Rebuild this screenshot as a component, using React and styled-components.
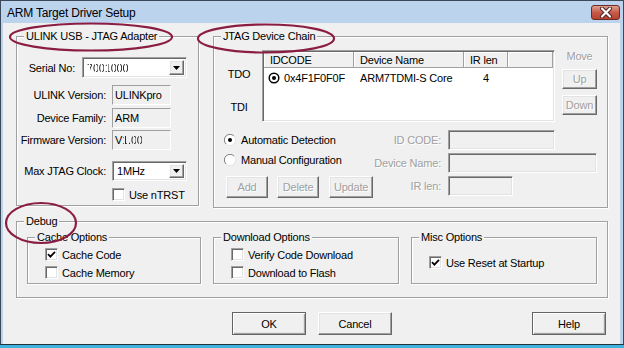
import React from "react";
import styled, { createGlobalStyle } from "styled-components";

const Page = createGlobalStyle`
  * { box-sizing: border-box; }
  body {
    margin: 0;
    background: #3cb4dc;
  }
`;

const Window = styled.div`
  position: relative;
  width: 624px;
  height: 345px;
  background: #bcd3ee;
  border: 1px solid #3a4858;
  border-bottom-color: #25313e;
  display: flex;
  flex-direction: column;
  font-family: "Liberation Sans", Arial, sans-serif;
  font-size: 11px;
  letter-spacing: -0.2px;
  color: #000;
`;

const TitleBar = styled.div`
  height: 22px;
  display: flex;
  align-items: flex-start;
  justify-content: space-between;
  padding: 0 3px 0 6px;
`;

const Title = styled.div`
  font-size: 12px;
  line-height: 14px;
  margin-top: 5px;
`;

const CloseButton = styled.div`
  width: 29px;
  height: 15px;
  margin-top: 4px;
  border: 1px solid #6b2b2b;
  border-radius: 3px;
  background: linear-gradient(#e0a08f, #c75a4a 50%, #b8412f);
  display: flex;
  align-items: center;
  justify-content: center;
`;

const Client = styled.div`
  margin-left: 2px;
  width: 617px;
  height: 321px;
  background: #f0f0f0;
  padding: 13px 0 0 13px;
`;

const TopRow = styled.div`
  display: flex;
  align-items: flex-start;
  gap: 14px;
`;

const Group = styled.div`
  position: relative;
  width: ${(p) => p.$w}px;
  height: ${(p) => p.$h}px;
  margin-top: ${(p) => p.$mt || 0}px;
  border: 1px solid #a0a0a0;
  box-shadow: inset 1px 1px 0 #fff, 1px 1px 0 #fff;
`;

const Legend = styled.span`
  position: absolute;
  top: -7px;
  left: 7px;
  padding: 0 2px;
  line-height: 13px;
  background: #f0f0f0;
  white-space: nowrap;
`;

const Row = styled.div`
  display: flex;
  align-items: center;
  height: ${(p) => p.$h || 20}px;
  margin-top: ${(p) => p.$mt || 0}px;
  padding-left: ${(p) => p.$pl || 0}px;
`;

const Label = styled.span`
  width: ${(p) => p.$w}px;
  margin-right: ${(p) => p.$gap || 6}px;
  text-align: right;
  white-space: nowrap;
  flex-shrink: 0;
  color: ${(p) => (p.$disabled ? "#a0a0a0" : "#000")};
  text-shadow: ${(p) => (p.$disabled ? "1px 1px 0 #fff" : "none")};
`;

const sunken = `
  border: 1px solid;
  border-color: #a0a0a0 #fff #fff #a0a0a0;
  box-shadow: inset 1px 1px 0 #696969, inset -1px -1px 0 #e3e3e3;
`;

const raised = `
  border: 1px solid;
  border-color: #fff #696969 #696969 #fff;
  box-shadow: inset -1px -1px 0 #a0a0a0, inset 1px 1px 0 #e3e3e3;
`;

const StaticField = styled.div`
  width: ${(p) => p.$w}px;
  height: 100%;
  border: 1px solid;
  border-color: #a0a0a0 #fff #fff #a0a0a0;
  background: #f0f0f0;
  padding-left: 2px;
  display: flex;
  align-items: center;
`;

const EditField = styled.div`
  ${sunken}
  width: ${(p) => p.$w}px;
  height: 100%;
  background: #f0f0f0;
`;

const Combo = styled.div`
  ${sunken}
  width: ${(p) => p.$w}px;
  height: 100%;
  background: #fff;
  display: flex;
  align-items: stretch;
  padding: 2px;
`;

const ComboText = styled.span`
  flex: 1;
  display: flex;
  align-items: center;
  padding-left: 2px;
`;

const DropButton = styled.div`
  ${raised}
  width: 15px;
  background: #f0f0f0;
  display: flex;
  align-items: center;
  justify-content: center;
`;

const Smudged = styled.span`
  color: #222;
  -webkit-mask-image: repeating-linear-gradient(90deg, #000 0 2px, transparent 2px 3px),
    linear-gradient(#000 0 45%, transparent 45% 60%, #000 60%);
  -webkit-mask-composite: source-in;
  mask-image: repeating-linear-gradient(90deg, #000 0 2px, transparent 2px 3px);
`;

const Check = styled.span`
  ${sunken}
  width: 13px;
  height: 13px;
  background: #fff;
  flex-shrink: 0;
  display: flex;
  align-items: center;
  justify-content: center;
  margin-right: ${(p) => p.$gap || 4}px;
`;

const CheckRow = styled.div`
  display: flex;
  align-items: center;
  height: 13px;
`;

const CheckList = styled.div`
  display: flex;
  flex-direction: column;
  gap: 5px;
  padding: ${(p) => p.$top}px 0 0 17px;
`;

const Button = styled.div`
  ${raised}
  width: ${(p) => p.$w}px;
  height: ${(p) => p.$h || 23}px;
  margin-left: ${(p) => p.$ml || 0}px;
  margin-top: ${(p) => p.$mt || 0}px;
  background: #f0f0f0;
  display: flex;
  align-items: center;
  justify-content: center;
  color: ${(p) => (p.$disabled ? "#a0a0a0" : "#000")};
  text-shadow: ${(p) => (p.$disabled ? "1px 1px 0 #fff" : "none")};
  ${(p) =>
    p.$default &&
    `
    border-color: #646464;
    box-shadow: inset 1px 1px 0 #fff, inset -1px -1px 0 #a0a0a0, inset -2px -2px 0 #e3e3e3;
  `}
`;

/* JTAG chain */
const ChainTop = styled.div`
  display: flex;
  margin-top: 13px;
`;

const PortColumn = styled.div`
  width: 48px;
  display: flex;
  flex-direction: column;
  align-items: center;
  padding: 18px 0 0 2px;
  gap: 20px;
  line-height: 13px;
`;

const ListView = styled.div`
  ${sunken}
  width: 293px;
  height: 72px;
  background: #fff;
  padding: 1px;
`;

const ListRow = styled.div`
  display: flex;
  height: ${(p) => (p.$header ? 16 : 19)}px;
  background: ${(p) => (p.$header ? "#f0f0f0" : "#fff")};
`;

const Cell = styled.div`
  width: ${(p) => (p.$w ? `${p.$w}px` : "auto")};
  flex: ${(p) => (p.$w ? "none" : 1)};
  display: flex;
  align-items: center;
  justify-content: ${(p) => (p.$center ? "center" : "flex-start")};
  padding-left: ${(p) => (p.$pl === undefined ? 6 : p.$pl)}px;
  gap: 4px;
  white-space: nowrap;
  ${(p) => p.$header && "box-shadow: inset -1px -1px 0 #a0a0a0, inset 1px 1px 0 #fff;"}
`;

const MoveColumn = styled.div`
  width: 35px;
  margin-left: 7px;
  display: flex;
  flex-direction: column;
  align-items: center;
`;

const GrayText = styled.span`
  line-height: 13px;
  color: #a0a0a0;
  text-shadow: 1px 1px 0 #fff;
`;

const ChainBottom = styled.div`
  display: flex;
  margin-top: 8px;
  padding-left: 12px;
`;

const ModeColumn = styled.div`
  width: 147px;
  display: flex;
  flex-direction: column;
  white-space: nowrap;
`;

const RadioRow = styled.div`
  display: flex;
  align-items: center;
  height: 20px;
  margin-left: -2px;
  gap: 5px;
`;

const ButtonRow = styled.div`
  display: flex;
  margin-top: 6px;
`;

const FieldGrid = styled.div`
  display: grid;
  grid-template-columns: 68px auto;
  grid-auto-rows: 20px;
  row-gap: 3px;
  column-gap: 7px;
  align-items: center;
  justify-items: start;
`;

const SubRow = styled.div`
  display: flex;
  gap: 12px;
  margin-top: 15px;
  padding-left: 10px;
`;

const ButtonBar = styled.div`
  display: flex;
  margin-top: 14px;
  padding: 0 14px 0 216px;
`;

const Overlay = styled.svg`
  position: absolute;
  top: -1px;
  left: -1px;
  pointer-events: none;
`;

const Tick = () => (
  <svg width="9" height="9" viewBox="0 0 9 9">
    <path d="M1 4.2 L3.4 6.6 L8 1.8" fill="none" stroke="#000" strokeWidth="1.8" />
  </svg>
);

const Arrow = () => (
  <svg width="7" height="4" viewBox="0 0 7 4">
    <path d="M0 0 H7 L3.5 4 Z" fill="#000" />
  </svg>
);

const Radio = ({ on }) => (
  <svg width="12" height="12" viewBox="0 0 12 12">
    <circle cx="6" cy="6" r="5.5" fill="#fff" />
    <path d="M10 2 A5.5 5.5 0 0 0 2 10" fill="none" stroke="#808080" strokeWidth="1" />
    <path d="M2 10 A5.5 5.5 0 0 0 10 2" fill="none" stroke="#e3e3e3" strokeWidth="1" />
    {on && <circle cx="6" cy="6" r="2" fill="#000" />}
  </svg>
);

const Target = () => (
  <svg width="12" height="12" viewBox="0 0 12 12">
    <circle cx="6" cy="6" r="4.8" fill="#fff" stroke="#000" strokeWidth="1.5" />
    <circle cx="6" cy="6" r="2" fill="#000" />
  </svg>
);

const CloseGlyph = () => (
  <svg width="14" height="11" viewBox="0 0 14 11">
    <path d="M3 1.5 L11 9.5 M11 1.5 L3 9.5" stroke="#4a2020" strokeWidth="4" strokeLinecap="round" />
    <path d="M3 1.5 L11 9.5 M11 1.5 L3 9.5" stroke="#fff" strokeWidth="2.2" strokeLinecap="round" />
  </svg>
);

const CheckItem = ({ checked, children }) => (
  <CheckRow>
    <Check>{checked && <Tick />}</Check>
    <span>{children}</span>
  </CheckRow>
);

export default function App() {
  return (
    <>
      <Page />
      <Window>
        <TitleBar>
          <Title>ARM Target Driver Setup</Title>
          <CloseButton>
            <CloseGlyph />
          </CloseButton>
        </TitleBar>
        <Client>
          <TopRow>
            <Group $w={183} $h={170}>
              <Legend>ULINK USB - JTAG Adapter</Legend>
              <Row $mt={20} $h={21}>
                <Label $w={58} $gap={7}>Serial No:</Label>
                <Combo $w={105}>
                  <ComboText>
                    <Smudged>7001000</Smudged>
                  </ComboText>
                  <DropButton>
                    <Arrow />
                  </DropButton>
                </Combo>
              </Row>
              <Row $mt={7}>
                <Label $w={89}>ULINK Version:</Label>
                <StaticField $w={59}>ULINKpro</StaticField>
              </Row>
              <Row $mt={3}>
                <Label $w={89}>Device Family:</Label>
                <StaticField $w={59}>ARM</StaticField>
              </Row>
              <Row $mt={2}>
                <Label $w={89}>Firmware Version:</Label>
                <StaticField $w={59}>
                  V<Smudged>1.00</Smudged>
                </StaticField>
              </Row>
              <Row $mt={11}>
                <Label $w={89}>Max JTAG Clock:</Label>
                <Combo $w={75}>
                  <ComboText>1MHz</ComboText>
                  <DropButton>
                    <Arrow />
                  </DropButton>
                </Combo>
              </Row>
              <Row $mt={7} $h={13} $pl={95}>
                <CheckItem>Use nTRST</CheckItem>
              </Row>
            </Group>

            <Group $w={395} $h={172}>
              <Legend>JTAG Device Chain</Legend>
              <ChainTop>
                <PortColumn>
                  <span>TDO</span>
                  <span>TDI</span>
                </PortColumn>
                <ListView>
                  <ListRow $header>
                    <Cell $header $w={90}>IDCODE</Cell>
                    <Cell $header $w={110}>Device Name</Cell>
                    <Cell $header $w={44}>IR len</Cell>
                    <Cell $header />
                  </ListRow>
                  <ListRow>
                    <Cell $w={90} $pl={4}>
                      <Target />
                      0x4F1F0F0F
                    </Cell>
                    <Cell $w={110}>ARM7TDMI-S Core</Cell>
                    <Cell $w={44} $center $pl={0}>4</Cell>
                    <Cell />
                  </ListRow>
                </ListView>
                <MoveColumn>
                  <GrayText>Move</GrayText>
                  <Button $w={35} $h={20} $mt={6} $disabled>Up</Button>
                  <Button $w={35} $h={20} $mt={6} $disabled>Down</Button>
                </MoveColumn>
              </ChainTop>
              <ChainBottom>
                <ModeColumn>
                  <RadioRow>
                    <Radio on />
                    Automatic Detection
                  </RadioRow>
                  <RadioRow>
                    <Radio />
                    Manual Configuration
                  </RadioRow>
                  <ButtonRow>
                    <Button $w={45} $h={22} $disabled>Add</Button>
                    <Button $w={45} $h={22} $ml={9} $disabled>Delete</Button>
                    <Button $w={47} $h={22} $ml={10} $disabled>Update</Button>
                  </ButtonRow>
                </ModeColumn>
                <FieldGrid>
                  <Label $w={68} $gap={0} $disabled>ID CODE:</Label>
                  <EditField $w={107} />
                  <Label $w={68} $gap={0} $disabled>Device Name:</Label>
                  <EditField $w={149} />
                  <Label $w={68} $gap={0} $disabled>IR len:</Label>
                  <EditField $w={65} />
                </FieldGrid>
              </ChainBottom>
            </Group>
          </TopRow>

          <Group $w={592} $h={77} $mt={13}>
            <Legend>Debug</Legend>
            <SubRow>
              <Group $w={174} $h={47}>
                <Legend>Cache Options</Legend>
                <CheckList $top={10}>
                  <CheckItem checked>Cache Code</CheckItem>
                  <CheckItem>Cache Memory</CheckItem>
                </CheckList>
              </Group>
              <Group $w={186} $h={47}>
                <Legend>Download Options</Legend>
                <CheckList $top={10}>
                  <CheckItem>Verify Code Download</CheckItem>
                  <CheckItem>Download to Flash</CheckItem>
                </CheckList>
              </Group>
              <Group $w={186} $h={47}>
                <Legend>Misc Options</Legend>
                <CheckList $top={18}>
                  <CheckItem checked>Use Reset at Startup</CheckItem>
                </CheckList>
              </Group>
            </SubRow>
          </Group>

          <ButtonBar>
            <Button $w={74} $default>OK</Button>
            <Button $w={74} $ml={12}>Cancel</Button>
            <Button $w={74} $default style={{ marginLeft: "auto" }}>Help</Button>
          </ButtonBar>
        </Client>

        <Overlay width="624" height="348" viewBox="0 0 624 348">
          <g fill="none" stroke="#8b1d45" strokeWidth="2.2">
            <ellipse cx="91" cy="37" rx="81" ry="13.5" />
            <ellipse cx="266" cy="38.5" rx="68" ry="14" />
            <ellipse cx="41" cy="223" rx="35" ry="20" />
          </g>
        </Overlay>
      </Window>
    </>
  );
}
